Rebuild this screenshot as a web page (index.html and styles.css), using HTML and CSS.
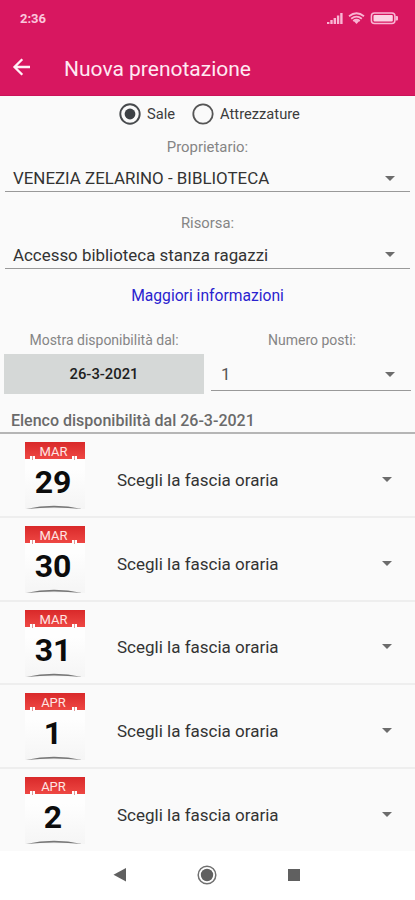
FILE: index.html
```
<!DOCTYPE html>
<html lang="it">
<head>
<meta charset="utf-8">
<meta name="viewport" content="width=device-width">
<title>Nuova prenotazione</title>
<link rel="stylesheet" href="styles.css">
</head>
<body>
<header class="top">
  <div class="status">
    <span class="clock">2:36</span>
    <svg class="status-icons" width="74" height="16" viewBox="0 0 74 16">
      <g fill="#f9b5d3">
        <path d="M1 12h2.400v2H1zM4.300 10h2.400v4H4.300zM7.600 8H10v6H7.600zM10.900 5.500h2.400V14h-2.400zM14.200 3h2.400v11h-2.400z"/>
        <path d="M30.500 14l-2.500-2.800q2.500-2 5 0z"/>
      </g>
      <g fill="none" stroke="#f9b5d3" stroke-width="1.800">
        <path d="M23 6.200q7.500-6 15 0M25.200 8.800q5.300-4.300 10.600 0M27.200 11q3.300-2.500 6.600 0"/>
        <rect x="45.400" y="3" width="23.500" height="10.600" rx="3" stroke-width="1.500"/>
      </g>
      <rect x="47.500" y="5" width="19.300" height="6.600" rx="1" fill="#fcd3e4"/>
      <path d="M69.500 6h1.500q1 0 1 1v2.500q0 1-1 1h-1.500z" fill="#f9b5d3"/>
    </svg>
  </div>
  <div class="appbar">
    <svg class="back" width="20" height="20" viewBox="0 0 20 20" fill="none" stroke="#fff0f6" stroke-width="2.300"><path d="M18 10H3M10.300 2.200L2.500 10l7.800 7.800"/></svg>
    <h1 class="title">Nuova prenotazione</h1>
  </div>
</header>
<main class="form">
  <div class="radios">
    <svg class="radio" width="22" height="22" viewBox="0 0 22 22"><circle cx="11" cy="11" r="9.700" fill="none" stroke="#474a4d" stroke-width="1.900"/><circle cx="11" cy="11" r="5.400" fill="#3d4145"/></svg>
    <span class="radio-label sale">Sale</span>
    <svg class="radio second" width="22" height="22" viewBox="0 0 22 22"><circle cx="11" cy="11" r="9.700" fill="none" stroke="#555" stroke-width="1.800"/></svg>
    <span class="radio-label attr">Attrezzature</span>
  </div>
  <div class="label owner-label"><span>Proprietario:</span></div>
  <div class="select owner"><span>VENEZIA ZELARINO - BIBLIOTECA</span><i class="caret"></i></div>
  <div class="label resource-label"><span>Risorsa:</span></div>
  <div class="select resource"><span>Accesso biblioteca stanza ragazzi</span><i class="caret"></i></div>
  <a class="more"><span>Maggiori informazioni</span></a>
  <div class="pair">
    <div class="col">
      <div class="label from-label"><span>Mostra disponibilità dal:</span></div>
      <div class="date-btn"><span>26-3-2021</span></div>
    </div>
    <div class="col">
      <div class="label seats-label"><span>Numero posti:</span></div>
      <div class="select seats"><span>1</span><i class="caret"></i></div>
    </div>
  </div>
  <h2 class="list-title"><span>Elenco disponibilità dal 26-3-2021</span></h2>
</main>
<section class="list">
  <div class="row"><div class="cal"><div class="month">MAR</div><div class="day">29</div><svg class="curl" width="60" height="6" viewBox="0 0 60 6"><path d="M1 5Q29 -1.500 57 5Q29 2 1 5z"/></svg></div><span class="slot">Scegli la fascia oraria</span><i class="caret"></i></div>
  <div class="row"><div class="cal"><div class="month">MAR</div><div class="day">30</div><svg class="curl" width="60" height="6" viewBox="0 0 60 6"><path d="M1 5Q29 -1.500 57 5Q29 2 1 5z"/></svg></div><span class="slot">Scegli la fascia oraria</span><i class="caret"></i></div>
  <div class="row"><div class="cal"><div class="month">MAR</div><div class="day">31</div><svg class="curl" width="60" height="6" viewBox="0 0 60 6"><path d="M1 5Q29 -1.500 57 5Q29 2 1 5z"/></svg></div><span class="slot">Scegli la fascia oraria</span><i class="caret"></i></div>
  <div class="row"><div class="cal"><div class="month">APR</div><div class="day">1</div><svg class="curl" width="60" height="6" viewBox="0 0 60 6"><path d="M1 5Q29 -1.500 57 5Q29 2 1 5z"/></svg></div><span class="slot">Scegli la fascia oraria</span><i class="caret"></i></div>
  <div class="row"><div class="cal"><div class="month">APR</div><div class="day">2</div><svg class="curl" width="60" height="6" viewBox="0 0 60 6"><path d="M1 5Q29 -1.500 57 5Q29 2 1 5z"/></svg></div><span class="slot">Scegli la fascia oraria</span><i class="caret"></i></div>
</section>
<nav class="nav">
  <svg width="14" height="16" viewBox="0 0 14 16"><path d="M13 1v13.500L.5 7.800z" fill="#606060"/></svg>
  <svg width="20" height="20" viewBox="0 0 20 20"><circle cx="10" cy="10" r="8.800" fill="none" stroke="#707070" stroke-width="1.500"/><circle cx="10" cy="10" r="6.200" fill="#606060"/></svg>
  <svg width="14" height="14" viewBox="0 0 14 14"><path d="M1 1h12v12H1z" fill="#606060"/></svg>
</nav>
</body>
</html>
```

FILE: styles.css
```
* { box-sizing: border-box; }
body { margin: 0; width: 415px; height: 900px; overflow: hidden; background: #fafafa; font-family: Roboto, "Liberation Sans", sans-serif; color: #333; display: flex; flex-direction: column; }
svg { display: block; flex: none; }
span { white-space: nowrap; }
.top { height: 96px; background: #d81760; flex: none; border-bottom: 1px solid #cb1259; }
.status { height: 36px; display: flex; justify-content: space-between; padding: 9px 16px 0 20px; }
.clock { font-size: 13px; line-height: 19px; font-weight: 700; color: #fbc6dc; }
.status-icons { margin: 1px -1px 0 0; }
.appbar { height: 64px; display: flex; align-items: center; padding-left: 12px; }
.back { margin-top: -2px; }
.title { margin: 1px 0 0 32px; font-size: 21px; line-height: 24px; font-weight: 400; color: #ffe9f2; }
.form { height: 338px; flex: none; border-bottom: 2px solid #b5b5b5; }
.radios { height: 36px; padding-left: 119px; display: flex; align-items: center; }
.radio-label { font-size: 14.7px; margin-left: 6px; color: #3c3c3c; }
.second { margin-left: 17px; }
.label { height: 20px; line-height: 20px; text-align: center; font-size: 14px; color: #858585; }
.owner-label { margin-top: 5px; font-size: 14.9px; }
.select { display: flex; align-items: center; justify-content: space-between; margin: 0 5px; padding: 0 15px 0 8px; font-size: 16.9px; border-bottom: 1px solid #999; }
.caret { width: 0; height: 0; border: 5px solid transparent; border-top-color: #6c6c6c; border-bottom: 0; flex: none; }
.owner { height: 35px; padding-top: 8px; }
.resource-label { margin-top: 21px; font-size: 14.8px; }
.resource { height: 36px; padding-top: 8px; }
.more { display: block; margin-top: 17px; height: 20px; line-height: 20px; font-size: 15.65px; color: #2a22cf; text-align: center; }
.pair { display: grid; grid-template-columns: 200px 200px; column-gap: 7px; padding-left: 4px; margin-top: 24px; }
.seats-label { padding-left: 2px; }
.date-btn { margin-top: 4px; height: 40px; background: #d5d8d7; display: flex; align-items: center; justify-content: center; font-size: 14.8px; font-weight: 500; color: #202020; }
.seats { margin: 4px 0 0; height: 37px; padding: 4px 16px 0 10px; color: #555; }
.list-title { margin: 17px 0 0 11px; font-size: 16px; line-height: 20px; font-weight: 500; color: #6a6a6a; }
.list { height: 417px; flex: none; }
.row { height: 83.75px; display: flex; align-items: center; padding-right: 23px; border-bottom: 2px solid #eee; }
.cal { width: 60px; height: 67px; margin-left: 25px; background: linear-gradient(#fefefe 40%, #f5f5f5); align-self: flex-start; margin-top: 8px; }
.month { height: 17px; background: linear-gradient(#d9292a, #ee4743); font-size: 13px; line-height: 19px; color: #ffe5e2; text-align: center; padding-right: 3px; position: relative; }
.month::before, .month::after { content: ""; position: absolute; top: 14px; width: 5px; height: 4px; background: linear-gradient(90deg, #fff 0 2px, #d99 2px 3px, #fff 3px); }
.month::before { left: 5px; }
.month::after { right: 8px; }
.day { height: 45px; line-height: 46px; text-align: center; font-size: 32px; font-weight: 700; color: #0c0c0c; padding-right: 4px; }
.curl { fill: #777; }
.slot { margin-left: 32px; font-size: 17px; flex: 1; margin-top: 10px; }
.row .caret { margin-top: 9px; }
.nav { height: 49px; background: #fff; display: flex; align-items: center; justify-content: space-between; padding: 0 114px 2px 113px; }
```
